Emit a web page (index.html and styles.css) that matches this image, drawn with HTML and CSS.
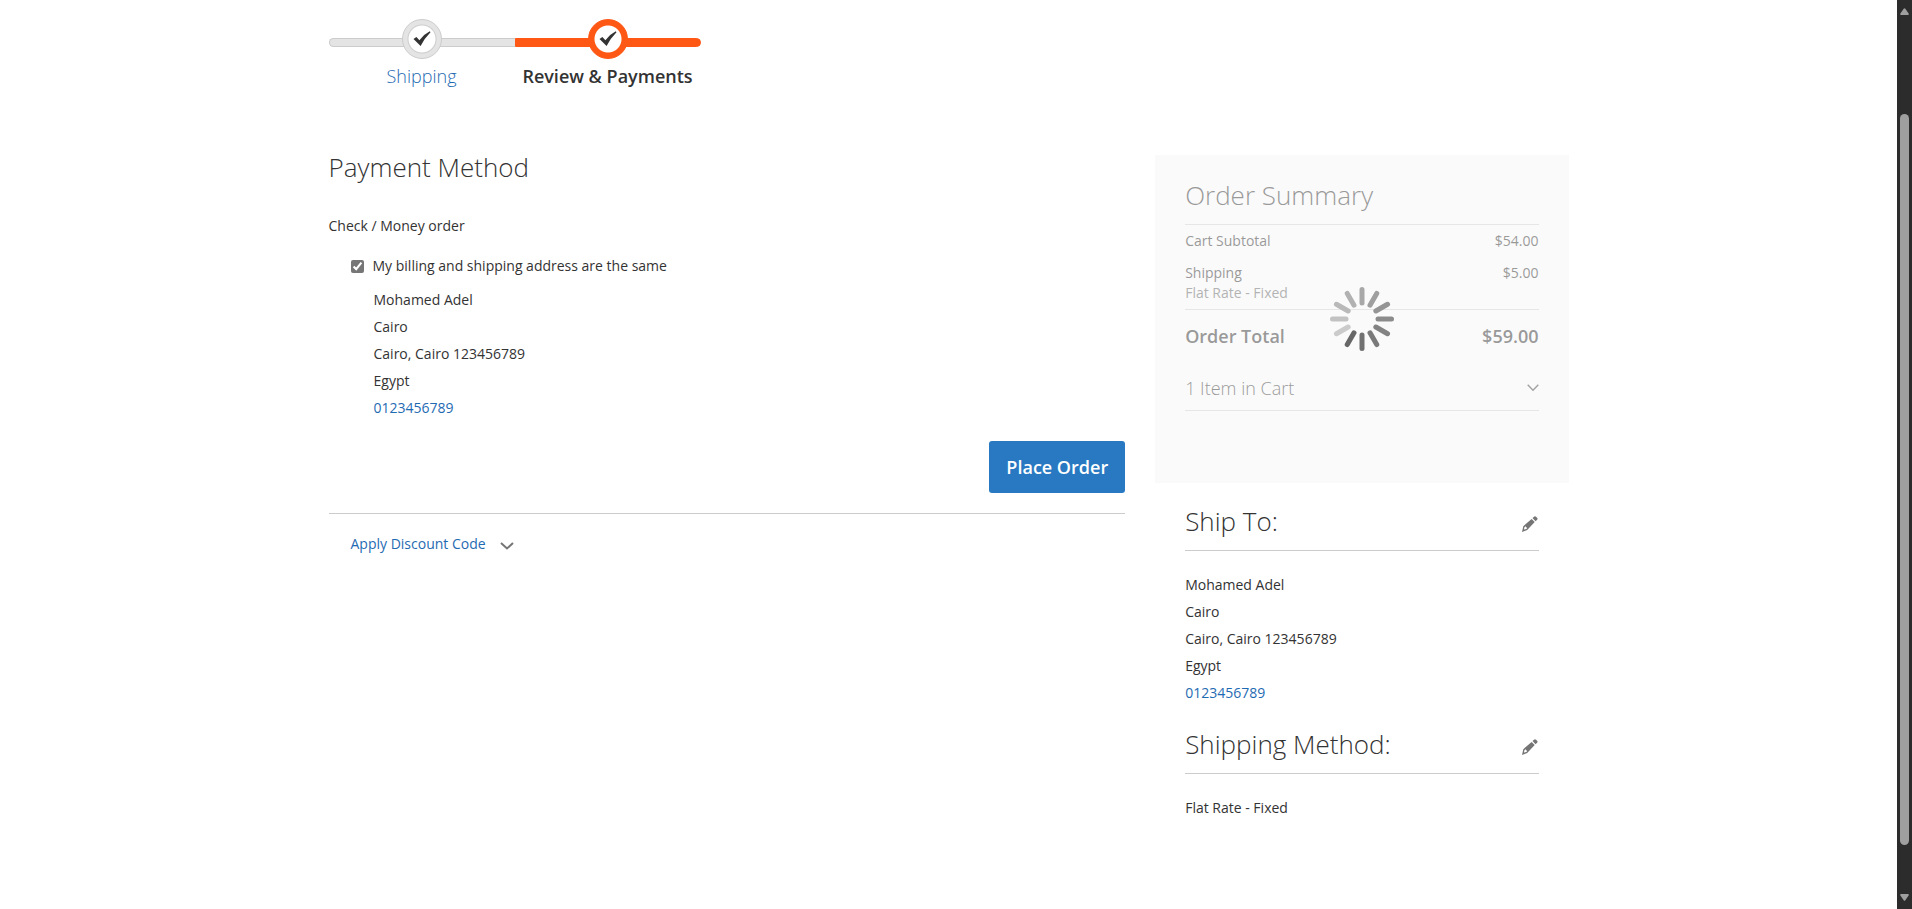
FILE: index.html
```html
<!DOCTYPE html>
<html lang="en">
<head>
<meta charset="utf-8">
<title>Checkout</title>
<link rel="stylesheet" href="styles.css">
</head>
<body>
<div class="page">
  <div class="checkout">
    <ol class="progress">
      <li class="step step-done">
        <span class="step-bar"></span>
        <span class="step-mark"><svg viewBox="0 0 18 16" width="18" height="16"><path d="M.5 8 3.400 5.900 6.400 9.200Q10.800 3.300 16.800 .3L17.500 1.300Q11.500 7.300 7.600 15Z"/></svg></span>
        <a class="step-label" href="#shipping">Shipping</a>
      </li>
      <li class="step step-active">
        <span class="step-bar"></span>
        <span class="step-mark"><svg viewBox="0 0 18 16" width="18" height="16"><path d="M.5 8 3.400 5.900 6.400 9.200Q10.800 3.300 16.800 .3L17.500 1.300Q11.500 7.300 7.600 15Z"/></svg></span>
        <span class="step-label">Review &amp; Payments</span>
      </li>
    </ol>

    <div class="columns">
      <main class="payment">
        <h1 class="title">Payment Method</h1>
        <p class="method">Check / Money order</p>
        <div class="billing">
          <div class="same-address">
            <input type="checkbox" id="same" checked>
            <label for="same">My billing and shipping address are the same</label>
          </div>
          <address class="address address-indent">
            Mohamed Adel<br>Cairo<br>Cairo, Cairo 123456789<br>Egypt<br><a href="tel:0123456789">0123456789</a>
          </address>
        </div>
        <div class="actions">
          <button class="place-order" type="button">Place Order</button>
        </div>
        <div class="discount">
          <button class="discount-toggle" type="button">
            <span>Apply Discount Code</span>
            <svg viewBox="0 0 14 8" width="14" height="8"><path d="M1 1 7 6.500 13 1"/></svg>
          </button>
        </div>
      </main>

      <aside class="sidebar">
        <section class="summary">
          <h2 class="title summary-title">Order Summary</h2>
          <table class="totals">
            <tbody>
              <tr><th scope="row">Cart Subtotal</th><td>$54.00</td></tr>
              <tr><th scope="row">Shipping<span class="carrier">Flat Rate - Fixed</span></th><td>$5.00</td></tr>
              <tr class="grand"><th scope="row">Order Total</th><td>$59.00</td></tr>
            </tbody>
          </table>
          <button class="items-toggle" type="button">
            <span>1 Item in Cart</span>
            <svg viewBox="0 0 12 8" width="12" height="8"><path d="M.7 .8 6 6.200 11.300 .8"/></svg>
          </button>
          <div class="loading">
            <svg viewBox="-32 -32 64 64" width="64" height="64" role="img" aria-label="Loading">
              <g stroke-width="5" stroke-linecap="round">
                <path stroke="#a8a8a8" d="M0-16V-29.500"/>
                <path stroke="#9f9f9f" d="M0-16V-29.500" transform="rotate(30)"/>
                <path stroke="#959595" d="M0-16V-29.500" transform="rotate(60)"/>
                <path stroke="#8b8b8b" d="M0-16V-29.500" transform="rotate(90)"/>
                <path stroke="#838383" d="M0-16V-29.500" transform="rotate(120)"/>
                <path stroke="#7a7a7a" d="M0-16V-29.500" transform="rotate(150)"/>
                <path stroke="#717171" d="M0-16V-29.500" transform="rotate(180)"/>
                <path stroke="#676767" d="M0-16V-29.500" transform="rotate(210)"/>
                <path stroke="#cbcbcb" d="M0-16V-29.500" transform="rotate(240)"/>
                <path stroke="#c2c2c2" d="M0-16V-29.500" transform="rotate(270)"/>
                <path stroke="#b9b9b9" d="M0-16V-29.500" transform="rotate(300)"/>
                <path stroke="#b1b1b1" d="M0-16V-29.500" transform="rotate(330)"/>
              </g>
            </svg>
          </div>
        </section>

        <section class="info">
          <div class="info-head">
            <h2 class="title">Ship To:</h2>
            <button class="edit" type="button" aria-label="Edit shipping address"><svg viewBox="0 0 16 16" width="16" height="16"><path fill-rule="evenodd" d="M0 16 1.300 10.200 9.600 2.900 12.700 6.100 5.200 14ZM2.300 11.400 2 13.500 4.300 13.100 5.100 12.200 3.600 10.200Z"/><path d="M10.500 2.100 12.400.5Q13.200 0 14 .7L15.300 2.100Q15.900 2.900 15.300 3.600L13.600 5.300Z"/></svg></button>
          </div>
          <address class="address">
            Mohamed Adel<br>Cairo<br>Cairo, Cairo 123456789<br>Egypt<br><a href="tel:0123456789">0123456789</a>
          </address>
        </section>

        <section class="info">
          <div class="info-head">
            <h2 class="title">Shipping Method:</h2>
            <button class="edit" type="button" aria-label="Edit shipping method"><svg viewBox="0 0 16 16" width="16" height="16"><path fill-rule="evenodd" d="M0 16 1.300 10.200 9.600 2.900 12.700 6.100 5.200 14ZM2.300 11.400 2 13.500 4.300 13.100 5.100 12.200 3.600 10.200Z"/><path d="M10.500 2.100 12.400.5Q13.200 0 14 .7L15.300 2.100Q15.900 2.900 15.300 3.600L13.600 5.300Z"/></svg></button>
          </div>
          <p class="address">Flat Rate - Fixed</p>
        </section>
      </aside>
    </div>
  </div>
</div>
<div class="scrollbar" aria-hidden="true">
  <svg viewBox="0 0 9 7" width="9" height="7"><path d="M3.700.7Q4.500-.3 5.300.7L8.800 5.700Q9 7 8 7H1Q0 7 .2 5.700Z"/></svg>
  <span class="scroll-track"><span class="scroll-thumb"></span></span>
  <svg viewBox="0 0 9 7" width="9" height="7"><path d="M3.700 6.300Q4.500 7.300 5.300 6.300L8.800 1.300Q9 0 8 0H1Q0 0 .2 1.300Z"/></svg>
</div>
</body>
</html>
```
FILE: styles.css
```css
* {
  box-sizing: border-box;
}

body {
  display: flex;
  min-height: 100vh;
  margin: 0;
  background: #fff;
  color: #333;
  font: 400 14px/20px "Open Sans", "Noto Sans", sans-serif;
}

h1, h2, p, ol, address {
  margin: 0;
  padding: 0;
  font-style: normal;
}

a {
  color: #1f6bb3;
  text-decoration: none;
}

button {
  margin: 0;
  padding: 0;
  border: 0;
  background: none;
  color: inherit;
  font: inherit;
  cursor: pointer;
}

svg {
  display: block;
  flex: none;
}

.page {
  flex: 1;
  min-width: 0;
}

.checkout {
  max-width: 1280px;
  margin: 0 auto;
  padding: 19px 20px 40px;
}

.title {
  font-size: 26px;
  font-weight: 300;
  line-height: 31px;
}

/* Progress steps */
.progress {
  display: flex;
  list-style: none;
}

.step {
  display: grid;
  grid-template-columns: 186px;
  grid-template-rows: 40px auto;
  row-gap: 4px;
  justify-items: center;
  font-size: 18px;
  line-height: 26px;
}

.step-bar,
.step-mark {
  grid-area: 1 / 1;
}

.step-bar {
  width: 100%;
  height: 9px;
  margin-top: 19px;
  border: 1px solid #ccc;
  background: #e4e4e4;
}

.step-done .step-bar {
  border-right: 0;
  border-radius: 6px 0 0 6px;
}

.step-active .step-bar {
  border-color: #ff5714;
  border-radius: 0 6px 6px 0;
  background: #ff5714;
}

.step-mark {
  display: grid;
  place-items: center;
  width: 40px;
  height: 40px;
  border: 1px solid #ccc;
  border-radius: 50%;
  background: radial-gradient(circle, #fff 13px, #ccc 14px, #e4e4e4 15px);
  fill: #333;
}

.step-active .step-mark {
  border-color: #ff5714;
  background: radial-gradient(circle, #fff 13px, #ff5714 14px);
}

.step-label {
  font-weight: 300;
}

.step-active .step-label {
  font-weight: 600;
}

/* Columns */
.columns {
  display: grid;
  grid-template-columns: 2fr 1fr;
  align-items: start;
  margin-top: 63px;
}

.payment {
  padding-right: 30px;
}

.method {
  margin-top: 33px;
}

.billing {
  padding: 20px 0 0 22px;
}

.same-address {
  display: flex;
  align-items: center;
  gap: 9px;
}

.same-address input {
  width: 13px;
  height: 13px;
  margin: 0;
  accent-color: #767676;
}

.address {
  line-height: 27px;
}

.address-indent {
  padding: 10px 0 0 23px;
}

.actions {
  display: flex;
  justify-content: flex-end;
  padding: 20px 0;
  border-bottom: 1px solid #ccc;
}

.place-order {
  padding: 15px 17px;
  border-radius: 3px;
  background: #2879c1;
  color: #fff;
  font-size: 18px;
  font-weight: 600;
  line-height: 22px;
}

.discount {
  padding: 20px 22px;
}

.discount-toggle {
  display: flex;
  align-items: center;
  gap: 14px;
  color: #1f6bb3;
}

.discount-toggle svg {
  margin-top: 4px;
  fill: none;
  stroke: #757575;
  stroke-width: 2;
}

/* Order summary */
.sidebar {
  padding-top: 3px;
}

.summary {
  position: relative;
  padding: 25px 30px 72px;
  background: #f5f5f5;
}

.summary-title {
  padding-bottom: 13px;
  border-bottom: 1px solid #ccc;
}

.totals {
  width: 100%;
  border-collapse: separate;
  border-spacing: 0;
}

.totals th,
.totals td {
  padding: 6px 0;
  font-weight: 400;
  text-align: left;
  vertical-align: top;
}

.totals td {
  text-align: right;
}

.carrier {
  display: block;
  color: #666;
}

.totals .grand th,
.totals .grand td {
  padding: 13px 0;
  border-top: 1px solid #ccc;
  font-size: 18px;
  font-weight: 600;
  line-height: 26px;
}

.items-toggle {
  display: flex;
  align-items: center;
  justify-content: space-between;
  width: 100%;
  padding: 13px 0 9px;
  border-bottom: 1px solid #ccc;
  font-size: 18px;
  font-weight: 300;
  line-height: 26px;
}

.items-toggle svg {
  fill: none;
  stroke: #444;
  stroke-width: 1.4;
}

.loading {
  position: absolute;
  inset: 0;
  display: grid;
  place-items: center;
  background: rgb(255 255 255 / 50%);
}

/* Shipping information */
.info {
  padding: 23px 30px 0;
}

.info-head {
  display: flex;
  align-items: center;
  justify-content: space-between;
  margin-bottom: 20px;
  padding-bottom: 13px;
  border-bottom: 1px solid #ccc;
}

.edit {
  padding: 5px 1px 0;
  fill: #757575;
}

/* Scrollbar */
.scrollbar {
  position: sticky;
  top: 0;
  display: flex;
  flex-direction: column;
  align-items: center;
  width: 15px;
  height: 100vh;
  padding: 8px 0;
  background: #2c2c2c;
  fill: #9f9f9f;
}

.scroll-track {
  display: flex;
  flex: 1;
  flex-direction: column;
}

.scroll-track::before {
  content: "";
  flex: 99;
}

.scroll-track::after {
  content: "";
  flex: 49;
}

.scroll-thumb {
  flex: 731;
  width: 9px;
  border-radius: 5px;
  background: #9f9f9f;
}
```
